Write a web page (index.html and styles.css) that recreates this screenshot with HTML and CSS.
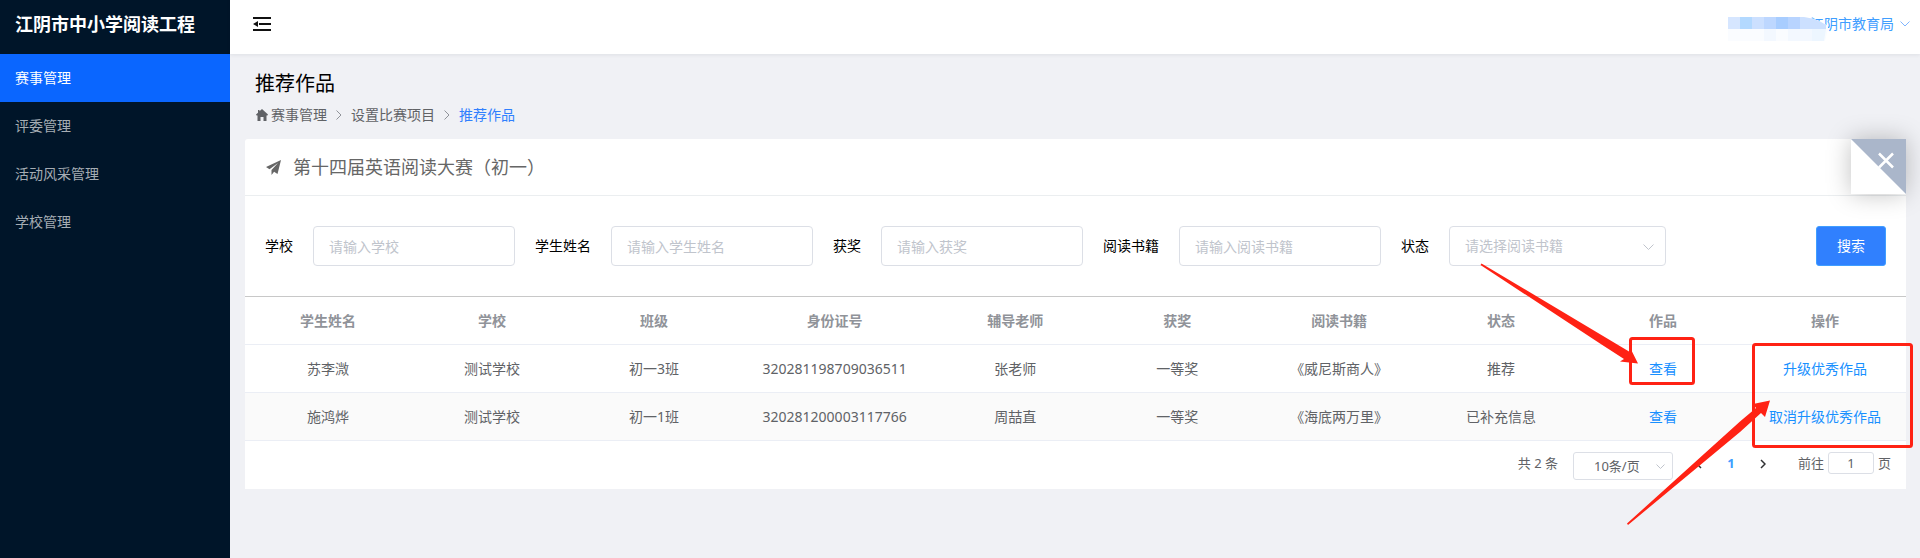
FILE: index.html
```html
<!DOCTYPE html>
<html lang="zh-CN">
<head>
    <meta charset="UTF-8">
    <meta name="viewport" content="width=device-width, initial-scale=1.0">
    <title>推荐作品</title>
    <link rel="stylesheet" href="styles.css">
</head>
<body>
    <div class="layout">
        <aside class="sidebar">
            <div class="logo">江阴市中小学阅读工程</div>
            <nav class="menu">
                <a class="menu-item active" href="#">赛事管理</a>
                <a class="menu-item" href="#">评委管理</a>
                <a class="menu-item" href="#">活动风采管理</a>
                <a class="menu-item" href="#">学校管理</a>
            </nav>
        </aside>

        <div class="main">
            <header class="header">
                <button class="fold" type="button" aria-label="收起菜单">
                    <svg width="18" height="16" viewBox="0 0 18 16">
                        <path d="M0 2h18M6 8h12M0 14h18" stroke="#111" stroke-width="2" fill="none"/>
                        <path d="M0 8l5-3v6z" fill="#111"/>
                    </svg>
                </button>
                <button class="user" type="button">
                    <span class="user-name">江阴市教育局</span>
                    <svg width="10" height="6" viewBox="0 0 10 6"><path d="M.5.5L5 5 9.500.5" stroke="#7fb5ff" fill="none"/></svg>
                    <svg class="mosaic" width="100" height="24" viewBox="0 0 100 24">
                        <path d="M0 0h76q14 2 24 9v3l-3 12H0z" fill="#fafcff"/>
                        <path d="M0 0h12v12H0z" fill="#d6e6ff"/>
                        <path d="M12 0h12v12H12z" fill="#b3d9ff"/>
                        <path d="M24 0h12v12H24z" fill="#cce0ff"/>
                        <path d="M36 0h12v12H36z" fill="#bdd7ff"/>
                        <path d="M48 0h12v12H48z" fill="#a8cdff"/>
                        <path d="M60 0h12v12H60z" fill="#b8d4ff"/>
                        <path d="M72 0h4q14 2 22 8v4H72z" fill="#cce0ff"/>
                        <path d="M36 12h12v12H36zM60 12h24v12H60z" fill="#f3f8ff"/>
                        <path d="M84 12h14l-2 12H84z" fill="#edf6ff"/>
                    </svg>
                </button>
            </header>

            <div class="content">
                <h1 class="page-title">推荐作品</h1>
                <nav class="breadcrumb">
                    <a class="crumb" href="#">
                        <svg width="12" height="12" viewBox="0 0 12 12"><path d="M6 0l6 5.500-.6.900H10.500V12H7.500V8h-3v4h-3V6.400H.6L0 5.500l2-1.800V1h1.500v1.300z" fill="#606266"/></svg>
                        赛事管理
                    </a>
                    <svg width="6" height="10" viewBox="0 0 6 10"><path d="M.5.5L5 5 .5 9.500" stroke="#909399" fill="none"/></svg>
                    <a class="crumb" href="#">设置比赛项目</a>
                    <svg width="6" height="10" viewBox="0 0 6 10"><path d="M.5.5L5 5 .5 9.500" stroke="#909399" fill="none"/></svg>
                    <a class="crumb current" href="#">推荐作品</a>
                </nav>

                <section class="card">
                    <button class="close" type="button" aria-label="关闭">
                        <svg width="55" height="55" viewBox="0 0 55 55">
                            <path d="M0 0h55v55z" fill="#aab6ca"/>
                            <path d="M28 14.500l14 14M42 14.500l-14 14" stroke="#fff" stroke-width="2.500" fill="none"/>
                        </svg>
                    </button>

                    <div class="card-header">
                        <svg width="15" height="15" viewBox="0 0 15 15">
                            <path d="M15 0L0 7l3.500 2.200L12 3 5.500 10v5l2.600-3.200L11.500 14z" fill="#666"/>
                        </svg>
                        <h2 class="card-title">第十四届英语阅读大赛（初一）</h2>
                    </div>

                    <form class="search">
                        <div class="field">
                            <label for="school">学校</label>
                            <input id="school" type="text" placeholder="请输入学校">
                        </div>
                        <div class="field">
                            <label for="student">学生姓名</label>
                            <input id="student" type="text" placeholder="请输入学生姓名">
                        </div>
                        <div class="field">
                            <label for="award">获奖</label>
                            <input id="award" type="text" placeholder="请输入获奖">
                        </div>
                        <div class="field">
                            <label for="book">阅读书籍</label>
                            <input id="book" type="text" placeholder="请输入阅读书籍">
                        </div>
                        <div class="field">
                            <label for="status">状态</label>
                            <div class="select">
                                <select id="status">
                                    <option>请选择阅读书籍</option>
                                </select>
                                <svg class="arrow" width="11" height="7" viewBox="0 0 11 7"><path d="M.5.5l5 5 5-5" stroke="#c0c4cc" fill="none"/></svg>
                            </div>
                        </div>
                        <button class="btn-search" type="button">搜索</button>
                    </form>

                    <table class="table">
                        <colgroup>
                            <col class="col-name">
                            <col>
                            <col>
                            <col class="col-id">
                            <col>
                            <col>
                            <col>
                            <col>
                            <col>
                            <col>
                        </colgroup>
                        <thead>
                            <tr>
                                <th>学生姓名</th>
                                <th>学校</th>
                                <th>班级</th>
                                <th>身份证号</th>
                                <th>辅导老师</th>
                                <th>获奖</th>
                                <th>阅读书籍</th>
                                <th>状态</th>
                                <th>作品</th>
                                <th>操作</th>
                            </tr>
                        </thead>
                        <tbody>
                            <tr>
                                <td>苏李溦</td>
                                <td>测试学校</td>
                                <td>初一3班</td>
                                <td>320281198709036511</td>
                                <td>张老师</td>
                                <td>一等奖</td>
                                <td>《威尼斯商人》</td>
                                <td>推荐</td>
                                <td><a href="#">查看</a></td>
                                <td><a href="#">升级优秀作品</a></td>
                            </tr>
                            <tr>
                                <td>施鸿烨</td>
                                <td>测试学校</td>
                                <td>初一1班</td>
                                <td>320281200003117766</td>
                                <td>周喆直</td>
                                <td>一等奖</td>
                                <td>《海底两万里》</td>
                                <td>已补充信息</td>
                                <td><a href="#">查看</a></td>
                                <td><a href="#">取消升级优秀作品</a></td>
                            </tr>
                        </tbody>
                    </table>

                    <div class="pagination">
                        <span class="total">共 2 条</span>
                        <div class="select page-size">
                            <select aria-label="每页条数">
                                <option>10条/页</option>
                            </select>
                            <svg class="arrow" width="9" height="6" viewBox="0 0 9 6"><path d="M.5.5l4 4 4-4" stroke="#c0c4cc" fill="none"/></svg>
                        </div>
                        <div class="pager">
                            <button type="button" aria-label="上一页"><svg width="6" height="10" viewBox="0 0 6 10"><path d="M5 1L1 5l4 4" stroke="#303133" stroke-width="1.500" fill="none"/></svg></button>
                            <button class="current" type="button">1</button>
                            <button type="button" aria-label="下一页"><svg width="6" height="10" viewBox="0 0 6 10"><path d="M1 1l4 4-4 4" stroke="#303133" stroke-width="1.500" fill="none"/></svg></button>
                        </div>
                        <label class="jump">前往 <input type="text" value="1"> 页</label>
                    </div>
                </section>
            </div>
        </div>

        <!-- hint marks above the table actions -->
        <svg class="marks" width="450" height="290" viewBox="1470 250 450 290">
            <g fill="none" stroke="#ff2214" stroke-width="3">
                <rect x="1630.500" y="338.500" width="63" height="45" rx="2"/>
                <rect x="1753.500" y="344.500" width="158" height="102" rx="2"/>
            </g>
            <path d="M1481.500 263.500L1629 351.500 1631 349.500 1638 363.500 1620 361.500 1624 359 1600 343.500 1480.500 265z" fill="#ff2214"/>
            <path d="M1627 523.500L1740 421.500 1756 408 1753 404 1770 400.500 1765 417 1761 413 1740 432 1628 525z" fill="#ff2214"/>
        </svg>
    </div>
</body>
</html>
```
FILE: styles.css
```css
* {
    box-sizing: border-box;
}

body {
    margin: 0;
    font-family: "Noto Sans", "Noto Sans CJK SC", sans-serif;
    font-size: 14px;
    line-height: 20px;
    color: #606266;
    background: #f0f1f5;
}

a {
    text-decoration: none;
}

button, input, select {
    font: inherit;
    color: inherit;
}

button {
    padding: 0;
    border: none;
    background: none;
    cursor: pointer;
}

svg {
    display: block;
    flex: none;
}

.layout {
    position: relative;
    display: flex;
    min-height: 100vh;
}

/* sidebar */
.sidebar {
    flex: none;
    width: 230px;
    background: #001529;
}

.logo {
    height: 54px;
    padding: 0 15px;
    line-height: 48px;
    font-size: 18px;
    font-weight: bold;
    color: #fff;
    white-space: nowrap;
}

.menu-item {
    display: block;
    padding: 0 15px;
    line-height: 48px;
    color: #a6adb4;
}

.menu-item.active {
    color: #fff;
    background: #0a66ff;
}

/* header */
.main {
    flex: 1;
    min-width: 0;
}

.header {
    display: flex;
    justify-content: space-between;
    align-items: center;
    height: 54px;
    padding: 0 10px 6px 23px;
    background: #fff;
    box-shadow: 0 1px 4px rgba(0, 21, 41, 0.08);
}

.user {
    position: relative;
    display: flex;
    align-items: center;
    gap: 6px;
    color: #409eff;
}

.mosaic {
    position: absolute;
    right: 82px;
    top: 3px;
}

/* content */
.content {
    padding: 18px 14px 0 15px;
}

.page-title {
    margin: 0;
    padding-left: 10px;
    font-size: 20px;
    font-weight: normal;
    line-height: 24px;
    color: #000;
}

.breadcrumb {
    display: flex;
    align-items: center;
    gap: 9px;
    padding: 9px 11px 14px;
}

.crumb {
    display: flex;
    align-items: center;
    gap: 3px;
    color: #606266;
}

.crumb.current {
    color: #3080fe;
}

.card {
    position: relative;
    background: #fff;
    border-radius: 3px 0 0 0;
}

.close {
    position: absolute;
    top: 0;
    right: 0;
    background: #fff;
    box-shadow: 0 0 24px rgba(0, 0, 0, 0.25);
}

.card-header {
    display: flex;
    align-items: center;
    gap: 12px;
    height: 57px;
    padding: 0 21px;
    border-bottom: 1px solid #ebeef0;
}

.card-title {
    margin: 0;
    font-size: 18px;
    font-weight: normal;
    color: #666;
}

/* search form */
.search {
    display: flex;
    gap: 20px;
    padding: 30px 20px;
    border-bottom: 1px solid #c8c8c8;
}

.field {
    display: flex;
    align-items: center;
    gap: 20px;
    color: #000;
}

.field label {
    white-space: nowrap;
}

.field input {
    width: 202px;
    height: 40px;
    padding: 0 15px;
    border: 1px solid #dcdfe6;
    border-radius: 4px;
}

.field input::placeholder {
    color: #c0c4cc;
}

.select {
    position: relative;
}

.select select {
    width: 217px;
    height: 40px;
    padding: 0 15px;
    border: 1px solid #dcdfe6;
    border-radius: 4px;
    background: #fff;
    color: #c0c4cc;
    appearance: none;
}

.select .arrow {
    position: absolute;
    right: 12px;
    top: 50%;
    margin-top: -2px;
    pointer-events: none;
}

.btn-search {
    width: 70px;
    height: 40px;
    margin-left: auto;
    border: 1px solid #409eff;
    border-radius: 3px;
    background: #3080fe;
    color: #fff;
}

/* table */
.table {
    width: 100%;
    table-layout: fixed;
    border-collapse: separate;
    border-spacing: 0;
    text-align: center;
}

.col-name {
    width: 10%;
}

.col-id {
    width: 12%;
}

.table th,
.table td {
    height: 48px;
    padding: 0;
    border-bottom: 1px solid #ebeef5;
}

.table th {
    color: #909399;
}

.table tbody tr:nth-child(even) {
    background: #fafafa;
}

.table a {
    color: #1890ff;
}

/* pagination */
.pagination {
    display: flex;
    justify-content: flex-end;
    align-items: flex-start;
    height: 48px;
    padding: 11px 15px 0;
    font-size: 13px;
    line-height: 22px;
}

.page-size {
    margin: 0 20px 0 15px;
}

.page-size select {
    width: 100px;
    height: 28px;
    padding: 0 20px;
    border-radius: 3px;
    color: #606266;
}

.page-size .arrow {
    right: 8px;
}

.pager {
    display: flex;
    margin-right: 29px;
}

.pager button {
    display: flex;
    justify-content: center;
    align-items: center;
    width: 12px;
    height: 24px;
}

.pager .current {
    width: 52px;
    height: 22px;
    color: #409eff;
    font-weight: bold;
}

.jump {
    display: flex;
    gap: 4px;
}

.jump input {
    width: 46px;
    height: 22px;
    padding: 0;
    border: 1px solid #dcdfe6;
    border-radius: 3px;
    text-align: center;
}

.marks {
    position: absolute;
    top: 250px;
    right: 0;
    pointer-events: none;
}
```
